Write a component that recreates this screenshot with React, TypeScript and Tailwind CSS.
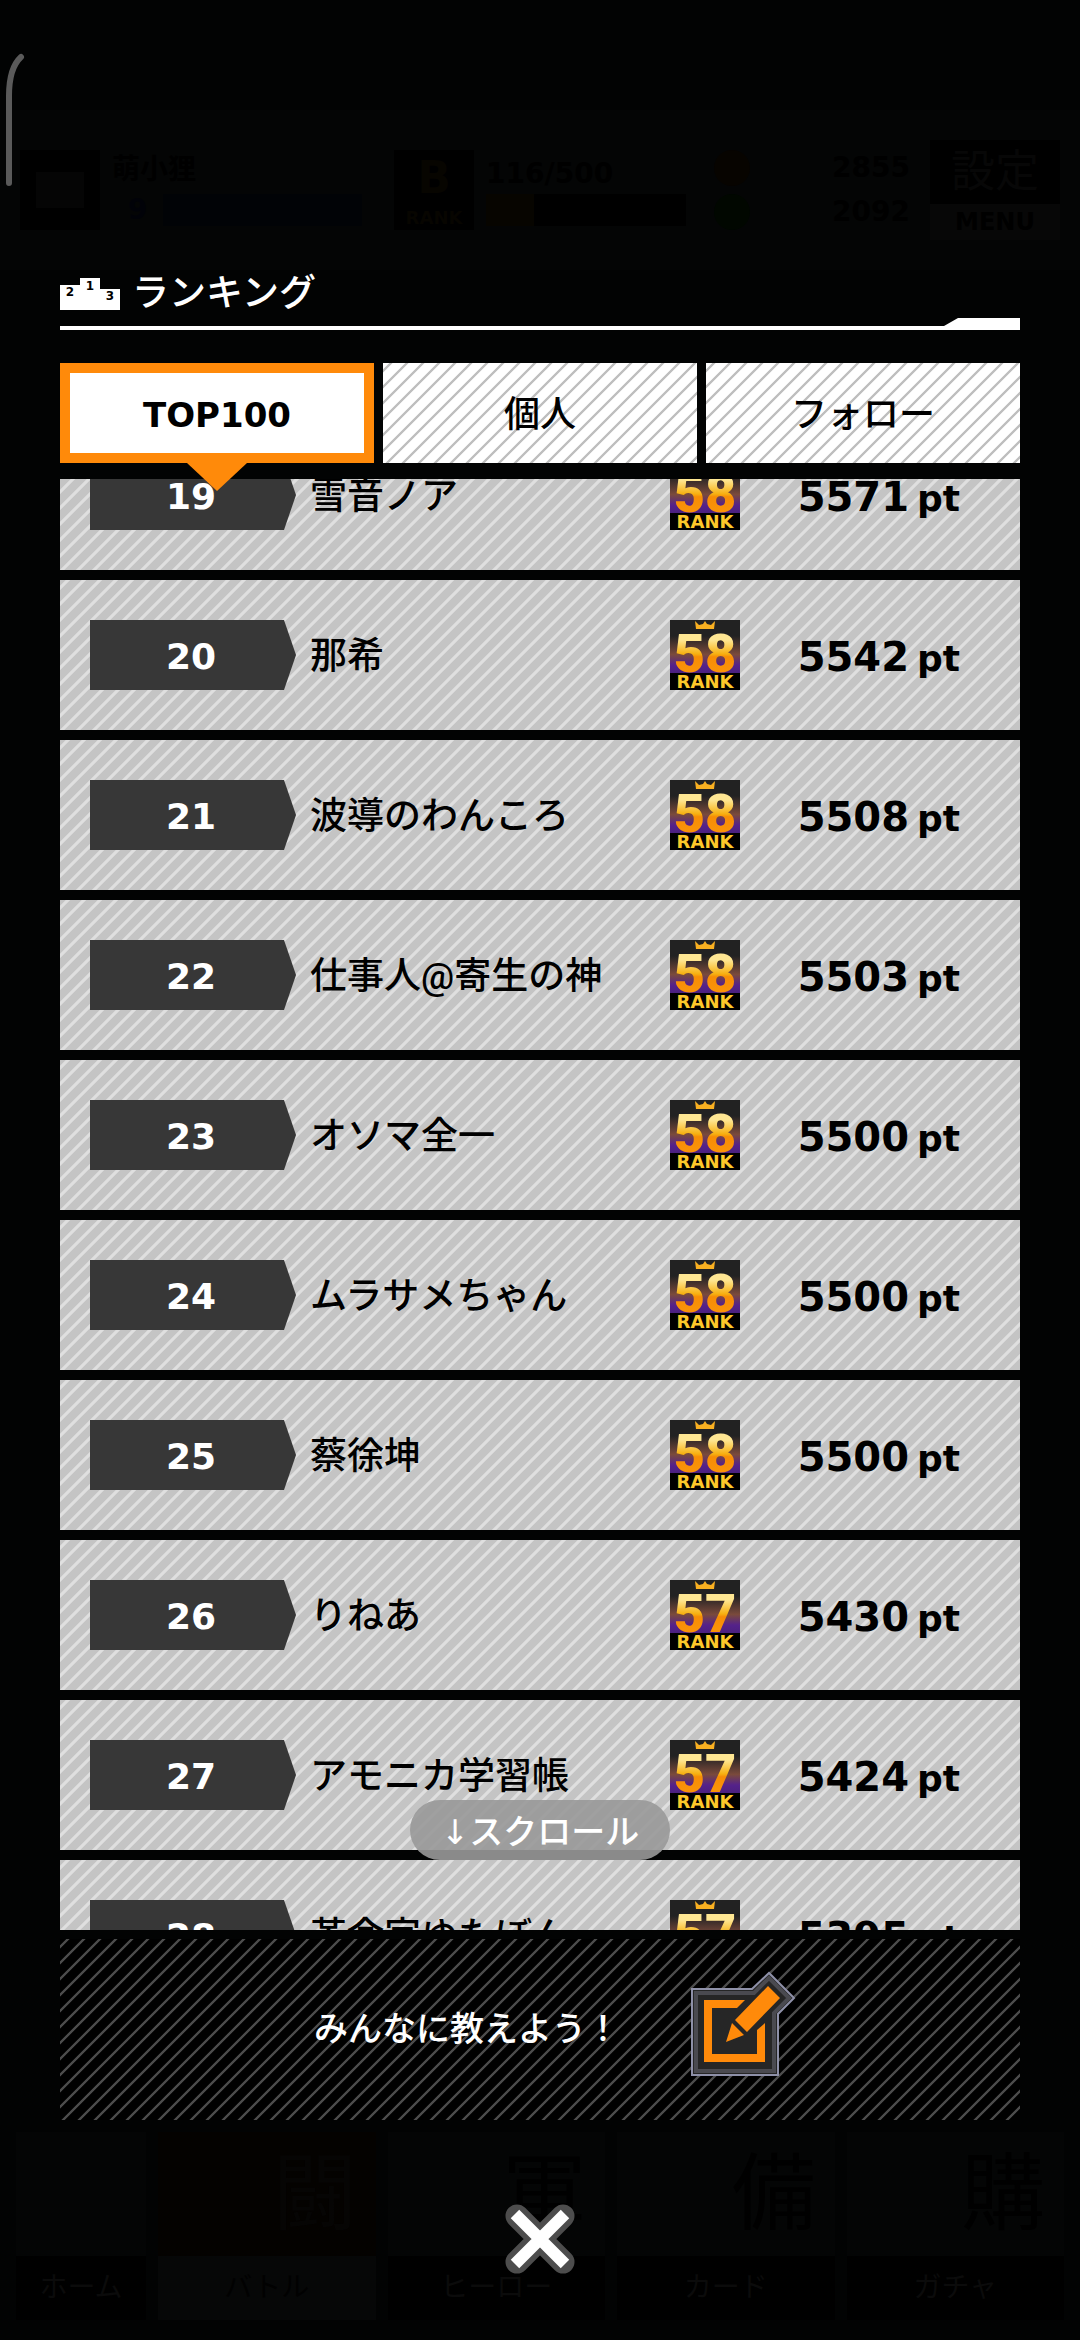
const jp = `font-['DejaVu_Sans','Noto_Sans_CJK_JP',sans-serif]`

const rows = [
  { place: 19, name: '雪音ノア', rank: 58, points: 5571 },
  { place: 20, name: '那希', rank: 58, points: 5542 },
  { place: 21, name: '波導のわんころ', rank: 58, points: 5508 },
  { place: 22, name: '仕事人@寄生の神', rank: 58, points: 5503 },
  { place: 23, name: 'オソマ全一', rank: 58, points: 5500 },
  { place: 24, name: 'ムラサメちゃん', rank: 58, points: 5500 },
  { place: 25, name: '蔡徐坤', rank: 58, points: 5500 },
  { place: 26, name: 'りねあ', rank: 57, points: 5430 },
  { place: 27, name: 'アモニカ学習帳', rank: 57, points: 5424 },
  { place: 28, name: '革命家ゆたぼん', rank: 57, points: 5395 },
]

const lightStripes =
  'bg-[#c4c4c4] bg-[linear-gradient(135deg,#c4c4c4_16%,#dfdfdf_20%,#dfdfdf_30%,#c4c4c4_34%,#c4c4c4_66%,#dfdfdf_70%,#dfdfdf_80%,#c4c4c4_84%)] bg-size-[16px_16px]'
const tabStripes =
  'bg-white bg-[linear-gradient(135deg,#fff_18%,#bebebe_22%,#bebebe_28%,#fff_32%,#fff_68%,#bebebe_72%,#bebebe_78%,#fff_82%)] bg-size-[16px_16px]'
const darkStripes =
  'bg-black bg-[linear-gradient(135deg,#000_18%,#4c4c4c_22%,#4c4c4c_28%,#000_32%,#000_68%,#4c4c4c_72%,#4c4c4c_78%,#000_82%)] bg-size-[16px_16px]'

function PodiumIcon() {
  return (
    <svg width="60" height="32" viewBox="0 0 60 32" aria-hidden="true">
      <path d="M0 7H20V0H40V11H60V32H0Z" fill="#fff" />
      <g fontFamily="DejaVu Sans" fontWeight="bold" fontSize="12" textAnchor="middle">
        <text x="10" y="18">2</text>
        <text x="30" y="12">1</text>
        <text x="50" y="22">3</text>
      </g>
    </svg>
  )
}

function RankBadge({ rank }: { rank: number }) {
  return (
    <svg width="70" height="70" viewBox="0 0 70 70" className="shrink-0" role="img" aria-label={`RANK ${rank}`}>
      <defs>
        <linearGradient id="badge-bg" x1="0" y1="0" x2="0" y2="1">
          <stop offset="0.3" stopColor="#222" />
          <stop offset="0.65" stopColor="#7a4a3c" />
          <stop offset="0.85" stopColor="#55228a" />
          <stop offset="1" stopColor="#4a2080" />
        </linearGradient>
        <linearGradient id="badge-num" gradientUnits="userSpaceOnUse" x1="0" y1="12" x2="0" y2="52">
          <stop offset="0.2" stopColor="#ffe793" />
          <stop offset="0.55" stopColor="#f7b010" />
          <stop offset="0.62" stopColor="#f78c06" />
          <stop offset="1" stopColor="#fb9408" />
        </linearGradient>
      </defs>
      <rect width="70" height="53" fill="url(#badge-bg)" />
      <path d="M25 1L29 5L33 4L35 1L37 4L41 5L45 1L44 9H26Z" fill="#f9b021" />
      <text x="35" y="52" textAnchor="middle" fontFamily="Roboto" fontWeight="900" fontSize="54" fill="url(#badge-num)">
        {rank}
      </text>
      <rect y="53" width="70" height="17" fill="#000" />
      <text x="35" y="68" textAnchor="middle" fontFamily="DejaVu Sans" fontWeight="bold" fontSize="18" fill="#fdc82a">
        RANK
      </text>
    </svg>
  )
}

function ComposeIcon() {
  return (
    <svg width="106" height="106" viewBox="0 0 106 106" aria-hidden="true">
      <path d="M2 18H62L79 2L104 27L88 43V104H2Z" fill="#262626" stroke="#8e90a8" strokeWidth="2" />
      <path d="M6 22H64L79 7L99 27L84 42V100H6Z" fill="none" stroke="#4a4a50" strokeWidth="4" />
      <path d="M55 29H14V91H75V52L67 59V83H22V37H47Z" fill="#ff8a0a" />
      <path d="M78 15L90 27L57 61L45 49ZM42 52L54 64L36 71Z" fill="#ff8a0a" />
    </svg>
  )
}

function StatusBar() {
  return (
    <header className="mt-[110px] flex h-[160px] items-center gap-3 bg-[#040505] px-5 text-black select-none">
      <div className="flex size-20 items-center justify-center bg-black">
        <div className="h-9 w-12 bg-[#050505]" />
      </div>
      <div className="w-[250px]">
        <p className="text-[28px] leading-10 font-bold">萌小狸</p>
        <div className="flex h-10 items-center gap-4 pl-4">
          <span className="text-[28px] leading-8 font-bold text-[#010208]">9</span>
          <div className="h-8 flex-1 bg-[#010306]" />
        </div>
      </div>
      <div className="ml-5 size-20 bg-black text-center font-bold text-[#070500]">
        <p className="text-[44px] leading-[56px]">B</p>
        <p className="text-[18px] leading-6">RANK</p>
      </div>
      <div className="w-[200px]">
        <p className="text-[28px] leading-10 font-bold">116/500</p>
        <div className="h-8 bg-black">
          <div className="h-8 w-12 bg-[#070500]" />
        </div>
      </div>
      <div className="ml-4 flex flex-col gap-2">
        <div className="size-9 rounded-full bg-[#070400]" />
        <div className="size-9 rounded-full bg-[#010700]" />
      </div>
      <div className="flex-1 text-right text-[28px] leading-[44px] font-bold">
        <p>2855</p>
        <p>2092</p>
      </div>
      <div className="ml-2 w-[130px] bg-black text-center">
        <p className="text-[44px] leading-[64px] text-[#070707]">設定</p>
        <p className="bg-[#070707] text-[24px] leading-9 font-bold">MENU</p>
      </div>
    </header>
  )
}

const tabBase = 'relative flex h-[100px] items-center justify-center'

export default function App() {
  return (
    <div className={`${jp} relative flex min-h-screen flex-col overflow-hidden bg-[#020303] text-black`}>
      <svg className="absolute top-[52px] left-0" width="30" height="136" viewBox="0 0 30 136" aria-hidden="true">
        <path d="M9 131V44Q9 16 21 5" fill="none" stroke="#5a5a5a" strokeWidth="6" strokeLinecap="round" />
      </svg>
      <StatusBar />

      <main className="px-[60px]">
        <div className="flex h-[48px] items-center gap-3">
          <PodiumIcon />
          <h1 className="text-[37px] leading-[48px] font-medium text-white">ランキング</h1>
        </div>
        <div className="flex items-end">
          <div className="h-1 flex-1 bg-white" />
          <div className="h-3 w-[76px] bg-white [clip-path:polygon(14px_0,100%_0,100%_100%,0_100%,0_8px)]" />
        </div>

        <div role="tablist" className="mt-[33px] grid grid-cols-3 gap-[9px] text-[36px] font-medium">
          <button role="tab" aria-selected="true" className={`${tabBase} border-10 border-[#ff8a0a] bg-white pt-1 text-[34px] font-bold`}>
            TOP100
            <span className="absolute top-[90px] z-10 h-7 w-[60px] bg-[#ff8a0a] [clip-path:polygon(0_0,100%_0,50%_100%)]" />
          </button>
          <button role="tab" aria-selected="false" className={`${tabBase} ${tabStripes} pt-1`}>個人</button>
          <button role="tab" aria-selected="false" className={`${tabBase} ${tabStripes} pt-1`}>フォロー</button>
        </div>

        <div className="relative mt-4 h-[1451px]">
          {/* the list is scrolled part way into row 19 */}
          <ol className="flex h-full flex-col justify-end gap-[10px] overflow-hidden">
            {rows.map((r) => (
              <li
                key={r.place}
                className={`${lightStripes} flex h-[150px] shrink-0 items-center pr-[60px] pl-[30px] last:-mb-[80px]`}
              >
                <span className="flex h-[70px] w-[206px] items-center justify-center bg-[#373737] pt-1 pr-1 text-[36px] font-bold text-white [clip-path:polygon(0_0,194px_0,100%_50%,194px_100%,0_100%)]">
                  {r.place}
                </span>
                <span className="flex-1 pt-1 pl-[14px] font-['Roboto','Noto_Sans_CJK_JP',sans-serif] text-[37px] font-medium whitespace-nowrap">
                  {r.name}
                </span>
                <RankBadge rank={r.rank} />
                <span className="flex w-[220px] items-baseline justify-end gap-2 pt-1 text-[40px] font-bold">
                  {r.points}
                  <span className="text-[36px]">pt</span>
                </span>
              </li>
            ))}
          </ol>
          <div className="absolute bottom-[70px] left-1/2 flex h-[60px] w-[260px] -translate-x-1/2 items-center justify-center rounded-full bg-[#999]/90 pt-1 text-[34px] font-medium text-white">
            ↓スクロール
          </div>
        </div>

        <div className={`${darkStripes} mt-[9px] flex h-[181px] items-center pl-[254px]`}>
          <p className="w-[376px] text-[34px] font-medium text-white">みんなに教えよう！</p>
          <button aria-label="投稿する" className="pb-3">
            <ComposeIcon />
          </button>
        </div>
      </main>

      <footer className="relative mt-3">
        <nav className="grid grid-cols-[130px_1fr_1fr_1fr_1fr] gap-3 px-4 text-center text-[#0b0b0b]">
          <a href="#home">
            <span className="block h-[124px] bg-[#040505]" />
            <span className="block bg-black text-[28px] leading-[64px]">ホーム</span>
          </a>
          <a href="#battle">
            <span className="block h-[124px] bg-[#040200] pl-24 text-[84px] leading-[124px] text-[#060504]">闘</span>
            <span className="block bg-[#060707] text-[28px] leading-[64px] text-[#010101]">バトル</span>
          </a>
          <a href="#hero">
            <span className="block h-[124px] bg-[#040505] pl-24 text-[84px] leading-[124px] text-black">軍</span>
            <span className="block bg-black text-[28px] leading-[64px]">ヒーロー</span>
          </a>
          <a href="#card">
            <span className="block h-[124px] bg-[#040505] pl-24 text-[84px] leading-[124px] text-black">備</span>
            <span className="block bg-black text-[28px] leading-[64px]">カード</span>
          </a>
          <a href="#gacha">
            <span className="block h-[124px] bg-[#040505] pl-24 text-[84px] leading-[124px] text-black">購</span>
            <span className="block bg-black text-[28px] leading-[64px]">ガチャ</span>
          </a>
        </nav>
        <button aria-label="閉じる" className="absolute top-[70px] left-1/2 -translate-x-1/2">
          <svg width="74" height="74" viewBox="0 0 74 74" aria-hidden="true">
            <path d="M14 14L60 60M60 14L14 60" stroke="#4d4d4d" strokeWidth="23" strokeLinejoin="round" strokeLinecap="round" />
            <path d="M12 12L62 62M62 12L12 62" stroke="#fff" strokeWidth="12" />
          </svg>
        </button>
      </footer>
    </div>
  )
}
